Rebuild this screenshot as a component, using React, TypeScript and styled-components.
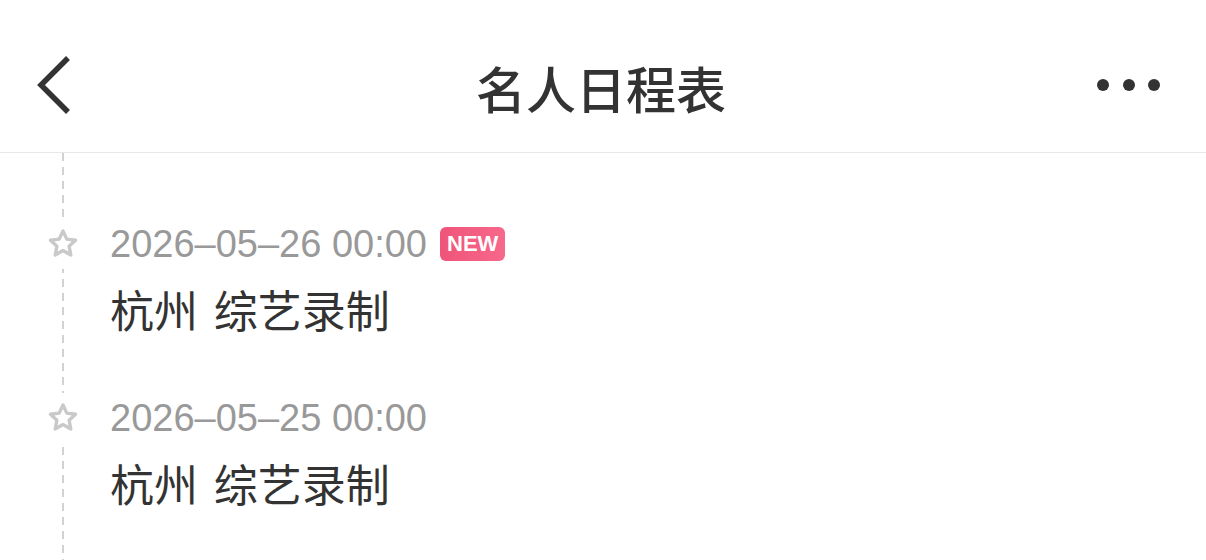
import React from "react";
import styled, { createGlobalStyle } from "styled-components";

const GlobalStyle = createGlobalStyle`
  html, body {
    margin: 0;
    padding: 0;
    background: #ffffff;
  }
  body {
    font-family: "Liberation Sans", "Noto Sans CJK SC", sans-serif;
    -webkit-font-smoothing: antialiased;
  }
`;

const Page = styled.div`
  width: 1206px;
  height: 560px;
  overflow: hidden;
  background: #fff;
`;

const Header = styled.header`
  box-sizing: border-box;
  height: 153px;
  padding: 18px 45px 0 37px;
  display: grid;
  grid-template-columns: 1fr auto 1fr;
  align-items: center;
  border-bottom: 1px solid #e8e8e8;
`;

const Back = styled.button`
  justify-self: start;
  border: 0;
  background: none;
  padding: 0;
  display: flex;
  cursor: pointer;
`;

const Title = styled.h1`
  margin: 0;
  font-family: "Noto Sans CJK SC", sans-serif;
  font-size: 50px;
  font-weight: 500;
  color: #333;
  line-height: 1;
  padding: 4px 0 0 4px;
`;

const More = styled.button`
  justify-self: end;
  border: 0;
  background: none;
  padding: 0;
  display: flex;
  cursor: pointer;
`;

const Timeline = styled.div`
  padding: 66px 0 0 38px;
  height: 407px;
  box-sizing: border-box;
  display: flex;
  flex-direction: column;
  gap: 56px;
  background-image: linear-gradient(to bottom, #d2d2d2 60%, transparent 60%);
  background-size: 2px 14px;
  background-position: 62px 0;
  background-repeat: repeat-y;
`;

const Item = styled.div`
  display: grid;
  grid-template-columns: 50px 1fr;
  column-gap: 22px;
`;

const Marker = styled.div`
  height: 50px;
  background: #fff;
  display: flex;
  align-items: center;
  justify-content: center;
`;

const Meta = styled.div`
  display: flex;
  align-items: center;
  gap: 13px;
  height: 50px;
`;

const Time = styled.span`
  font-size: 38px;
  color: #999;
`;

const Badge = styled.span`
  display: inline-flex;
  align-items: center;
  height: 34px;
  padding: 0 7px;
  border-radius: 6px;
  background: linear-gradient(90deg, #ef5479, #f7688a);
  color: #fff;
  font-size: 22px;
  font-weight: 700;
`;

const Event = styled.div`
  grid-column: 2;
  margin-top: 12px;
  font-family: "Noto Sans CJK SC", sans-serif;
  font-size: 44px;
  line-height: 56px;
  color: #333;
  word-spacing: 6px;
`;

const Star = () => (
  <svg width="32" height="32" viewBox="0 0 32 32">
    <path
      d="M16 3 L19.8 11.1 L28.5 12.2 L22.1 18.2 L23.8 27 L16 22.6 L8.2 27 L9.9 18.2 L3.5 12.2 L12.2 11.1 Z"
      fill="none"
      stroke="#c9c9c9"
      strokeWidth="3.4"
      strokeLinejoin="round"
    />
  </svg>
);

type Schedule = { time: string; text: string; isNew?: boolean };

const schedules: Schedule[] = [
  { time: "2026–05–26 00:00", text: "杭州 综艺录制", isNew: true },
  { time: "2026–05–25 00:00", text: "杭州 综艺录制" },
];

const App = () => {
  return (
    <Page>
      <GlobalStyle />
      <Header>
        <Back aria-label="back">
          <svg width="34" height="58" viewBox="0 0 34 58">
            <path d="M31 2 L4 29 L31 56" fill="none" stroke="#333" strokeWidth="5.5" />
          </svg>
        </Back>
        <Title>名人日程表</Title>
        <More aria-label="more">
          <svg width="64" height="14" viewBox="0 0 64 14">
            <circle cx="6" cy="7" r="6" fill="#333" />
            <circle cx="32" cy="7" r="6" fill="#333" />
            <circle cx="57" cy="7" r="6" fill="#333" />
          </svg>
        </More>
      </Header>
      <Timeline>
        {schedules.map((s, i) => (
          <Item key={i}>
            <Marker>
              <Star />
            </Marker>
            <Meta>
              <Time>{s.time}</Time>
              {s.isNew && <Badge>NEW</Badge>}
            </Meta>
            <Event>{s.text}</Event>
          </Item>
        ))}
      </Timeline>
    </Page>
  );
};

export default App;
